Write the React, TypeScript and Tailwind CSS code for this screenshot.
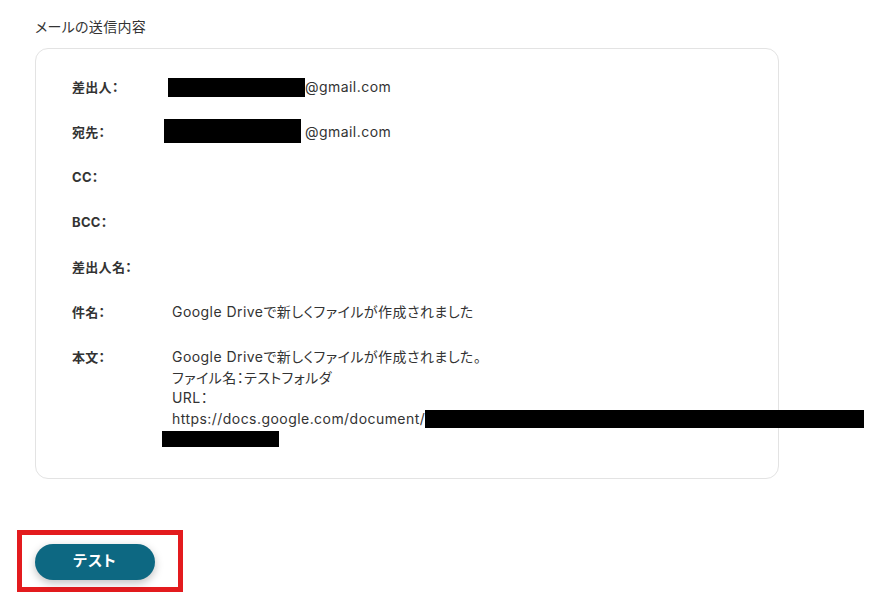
import React from "react";

const Row = ({ label, children }: { label: string; children?: React.ReactNode }) => (
  <div className="flex min-h-[20.5px]">
    <div className="w-[100px] shrink-0 text-[13px] font-bold leading-[20.5px] tracking-[0.3px] text-[#333]">{label}</div>
    <div className="text-[14px] leading-[20.5px] tracking-[0.45px] text-[#333]">{children}</div>
  </div>
);

export default function App() {
  return (
    <div className={'w-[870px] h-[600px] bg-white overflow-hidden font-[Inter,"Noto_Sans_CJK_JP",sans-serif] [font-feature-settings:"palt"]'}>
      <div className="pl-[35px] pt-[17px] text-[14px] leading-[20px] tracking-[0.3px] text-[#333]">メールの送信内容</div>
      <div className="ml-[35px] mt-[11px] w-[744px] rounded-[13px] border border-[#e3e3e3] pl-[36px] pt-[28px] pb-[28px]">
        <div className="flex flex-col gap-[24.5px]">
          <Row label="差出人：">
            <span className="flex items-center h-[20.5px]">
              <span className="inline-block ml-[-4px] h-[19px] w-[137px] shrink-0 bg-black" />
              <span>@gmail.com</span>
            </span>
          </Row>
          <Row label="宛先：">
            <span className="flex items-center h-[20.5px]">
              <span className="inline-block ml-[-8px] mt-[-2px] h-[24px] w-[137px] shrink-0 bg-black" />
              <span className="pl-[4px]">@gmail.com</span>
            </span>
          </Row>
          <Row label="CC：" />
          <Row label="BCC：" />
          <Row label="差出人名：" />
          <Row label="件名：">Google Driveで新しくファイルが作成されました</Row>
          <Row label="本文：">
            <div>Google Driveで新しくファイルが作成されました。</div>
            <div>ファイル名：テストフォルダ</div>
            <div>URL：</div>
            <div className="flex items-center whitespace-nowrap">
              https://docs.google.com/document/
              <span className="inline-block h-[18px] w-[439px] shrink-0 bg-black" />
            </div>
            <div className="h-[20.5px] flex items-center">
              <span className="inline-block ml-[-10px] h-[16px] w-[117px] bg-black" />
            </div>
          </Row>
        </div>
      </div>
      <div className="ml-[17px] mt-[51px] w-[166px] h-[62px] border-[5px] border-[#e31b1e] pl-[13px] pt-[9px]">
        <button className="h-[36px] w-[120px] rounded-full bg-[#0d6882] text-white text-[15px] font-bold tracking-[1px] shadow-[0_3px_8px_rgba(0,0,0,0.25)]">
          テスト
        </button>
      </div>
    </div>
  );
}
